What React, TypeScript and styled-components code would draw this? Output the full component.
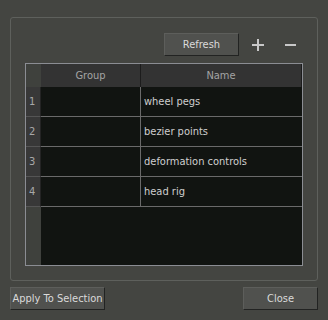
import React from "react";
import styled, { createGlobalStyle } from "styled-components";

const GlobalStyle = createGlobalStyle`
  html, body {
    margin: 0;
    padding: 0;
    background: #444541;
  }
  body {
    font-family: "DejaVu Sans Condensed", "DejaVu Sans", sans-serif;
    font-size: 11px;
  }
  * { box-sizing: border-box; }
`;

const Page = styled.div`
  width: 328px;
  height: 320px;
  padding: 17px 10px 0 10px;
  display: flex;
  flex-direction: column;
  background: #444541;
`;

const GroupBox = styled.div`
  height: 264px;
  border: 1px solid #5e605c;
  border-radius: 3px;
  padding: 15px 14px 14px 14px;
  display: flex;
  flex-direction: column;
`;

const Toolbar = styled.div`
  height: 23px;
  display: flex;
  justify-content: flex-end;
  align-items: center;
  padding-right: 3px;
  margin-bottom: 7px;
`;

const Button = styled.button<{ $w: number }>`
  width: ${(p) => p.$w}px;
  height: 23px;
  padding: 0;
  margin: 0;
  background: #50514e;
  border: 1px solid;
  border-color: #5d5e5b #222322 #222322 #5d5e5b;
  color: #dadada;
  font-family: inherit;
  font-size: 11px;
  display: flex;
  align-items: center;
  justify-content: center;
`;

const IconButton = styled.button<{ $ml: number }>`
  width: 20px;
  height: 23px;
  margin: 0 0 0 ${(p) => p.$ml}px;
  padding: 0;
  background: transparent;
  border: none;
  display: flex;
  align-items: center;
  justify-content: center;
`;

const Table = styled.div`
  height: 203px;
  border: 1px solid #8b8d93;
  display: grid;
  grid-template-columns: 15px 100px 161px;
  grid-template-rows: 23px repeat(4, 30px) 1fr;
`;

const Corner = styled.div`
  background: #3f413d;
`;

const HeaderCell = styled.div`
  background: #333333;
  border-right: 1px solid #1c1c1c;
  color: #a4a4a4;
  display: flex;
  align-items: center;
  justify-content: center;
`;

const RowHeader = styled.div`
  background: #383838;
  border-right: 1px solid #242424;
  border-bottom: 1px solid #555555;
  color: #a8a8a8;
  padding-left: 3px;
  display: flex;
  align-items: center;
`;

const Cell = styled.div<{ $sep?: boolean }>`
  background: #111411;
  border-bottom: 1px solid #6a6a6a;
  border-right: ${(p) => (p.$sep ? "1px solid #6a6a6a" : "none")};
  color: #cfcfcf;
  padding-left: 3px;
  display: flex;
  align-items: center;
`;

const FillerHeader = styled.div`
  background: #3f413d;
`;

const FillerData = styled.div`
  grid-column: span 2;
  background: #111411;
`;

const Footer = styled.div`
  margin-top: 6px;
  display: flex;
  justify-content: space-between;
`;

const rows = ["wheel pegs", "bezier points", "deformation controls", "head rig"];

export default function App() {
  return (
    <>
      <GlobalStyle />
      <Page>
        <GroupBox>
          <Toolbar>
            <Button $w={75}>Refresh</Button>
            <IconButton $ml={9} aria-label="add">
              <svg width="12" height="12" viewBox="0 0 12 12">
                <rect x="0" y="5" width="12" height="2" fill="#c8c8c8" />
                <rect x="5" y="0" width="2" height="12" fill="#c8c8c8" />
              </svg>
            </IconButton>
            <IconButton $ml={12} aria-label="remove">
              <svg width="11" height="12" viewBox="0 0 11 12">
                <rect x="0" y="5" width="11" height="2" fill="#c8c8c8" />
              </svg>
            </IconButton>
          </Toolbar>
          <Table>
            <Corner />
            <HeaderCell>Group</HeaderCell>
            <HeaderCell>Name</HeaderCell>
            {rows.map((r, i) => (
              <React.Fragment key={r}>
                <RowHeader>{i + 1}</RowHeader>
                <Cell $sep />
                <Cell>{r}</Cell>
              </React.Fragment>
            ))}
            <FillerHeader />
            <FillerData />
          </Table>
        </GroupBox>
        <Footer>
          <Button $w={95}>Apply To Selection</Button>
          <Button $w={75}>Close</Button>
        </Footer>
      </Page>
    </>
  );
}
